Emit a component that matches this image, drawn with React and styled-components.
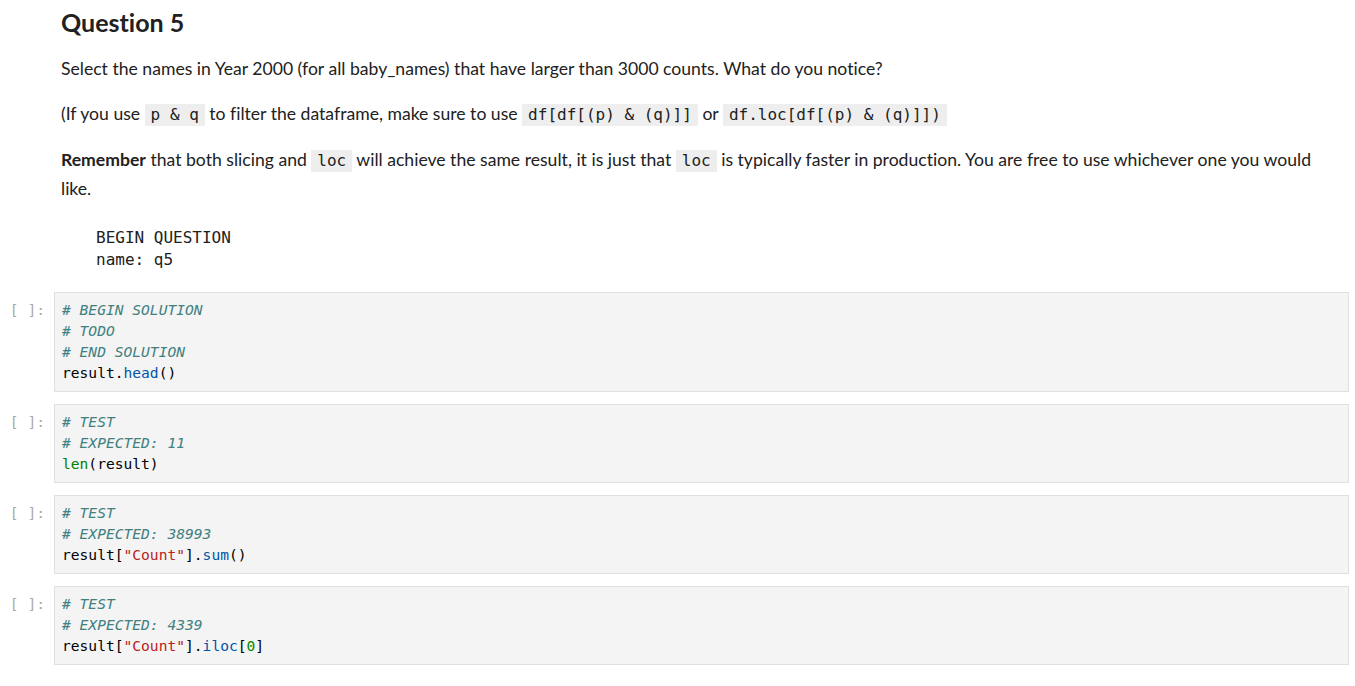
import React from 'react'
import styled, { createGlobalStyle } from 'styled-components'

const GlobalStyle = createGlobalStyle`
  html, body {
    margin: 0;
    padding: 0;
    background: #ffffff;
  }
  body {
    font-family: Lato, "Noto Sans", sans-serif;
    font-variant-ligatures: none;
    color: #212121;
  }
`

const mono = `"DejaVu Sans Mono", "Liberation Mono", monospace`

const Notebook = styled.div`
  display: flex;
  flex-direction: column;
  padding: 7px 6px 20px 0;
`

const Cell = styled.div`
  display: flex;
  align-items: flex-start;
  margin-bottom: ${(p) => (p.$gap === undefined ? 12 : p.$gap)}px;
`

const Prompt = styled.div`
  flex: 0 0 54px;
  box-sizing: border-box;
  padding: 7px 9px 0 0;
  text-align: right;
  font-family: ${mono};
  font-size: 14.6px;
  line-height: 21px;
  color: #aaaaaa;
  white-space: pre;
`

const Markdown = styled.div`
  flex: 1;
  min-width: 0;
  padding: 0 6px 0 7px;
`

const Heading = styled.h2`
  margin: 0 0 17px;
  font-size: 25px;
  line-height: 31px;
  font-weight: 700;
  color: #212121;
`

const Para = styled.p`
  margin: 0 0 17px;
  font-size: 17.6px;
  line-height: 28px;
`

const Code = styled.code`
  font-family: ${mono};
  font-size: 16px;
  background: #eeeeee;
  padding: 1px 6px 2px;
  color: #212121;
`

const Pre = styled.pre`
  margin: 24px 0 21px 35px;
  font-family: ${mono};
  font-size: 16px;
  line-height: 22px;
  color: #212121;
`

const Editor = styled.div`
  flex: 1;
  min-width: 0;
  background: #f4f4f4;
  border: 1px solid #e0e0e0;
  padding: 6px 7px 8px;
  font-family: ${mono};
  font-size: 14.6px;
  line-height: 21px;
  color: #000000;
  white-space: pre;
`

const Line = styled.div`
  min-height: 21px;
`

const tokColors = {
  comment: '#408080',
  prop: '#0055aa',
  builtin: '#008000',
  str: '#ba2121',
  num: '#008800',
}

const Tok = styled.span`
  color: ${(p) => tokColors[p.$k] || '#000'};
  font-style: ${(p) => (p.$k === 'comment' ? 'italic' : 'normal')};
`

const CodeCell = ({ lines, gap }) => (
  <Cell $gap={gap}>
    <Prompt>[ ]:</Prompt>
    <Editor>
      {lines.map((l, i) => (
        <Line key={i}>{l}</Line>
      ))}
    </Editor>
  </Cell>
)

const App = () => (
  <>
    <GlobalStyle />
    <Notebook>
      <Cell $gap={0}>
        <Prompt />
        <Markdown>
          <Heading>Question 5</Heading>
          <Para>
            Select the names in Year 2000 (for all baby_names) that have larger than 3000 counts. What do you notice?
          </Para>
          <Para>
            (If you use <Code>p &amp; q</Code> to filter the dataframe, make sure to use{' '}
            <Code>df[df[(p) &amp; (q)]]</Code> or <Code>df.loc[df[(p) &amp; (q)]])</Code>
          </Para>
          <Para>
            <b>Remember</b> that both slicing and <Code>loc</Code> will achieve the same result, it is just that{' '}
            <Code>loc</Code> is typically faster in production. You are free to use whichever one you would like.
          </Para>
          <Pre>{'BEGIN QUESTION\nname: q5'}</Pre>
        </Markdown>
      </Cell>

      <CodeCell
        lines={[
          <Tok $k="comment"># BEGIN SOLUTION</Tok>,
          <Tok $k="comment"># TODO</Tok>,
          <Tok $k="comment"># END SOLUTION</Tok>,
          <>result.<Tok $k="prop">head</Tok>()</>,
        ]}
      />
      <CodeCell
        lines={[
          <Tok $k="comment"># TEST</Tok>,
          <Tok $k="comment"># EXPECTED: 11</Tok>,
          <><Tok $k="builtin">len</Tok>(result)</>,
        ]}
      />
      <CodeCell
        lines={[
          <Tok $k="comment"># TEST</Tok>,
          <Tok $k="comment"># EXPECTED: 38993</Tok>,
          <>result[<Tok $k="str">"Count"</Tok>].<Tok $k="prop">sum</Tok>()</>,
        ]}
      />
      <CodeCell
        lines={[
          <Tok $k="comment"># TEST</Tok>,
          <Tok $k="comment"># EXPECTED: 4339</Tok>,
          <>result[<Tok $k="str">"Count"</Tok>].<Tok $k="prop">iloc</Tok>[<Tok $k="num">0</Tok>]</>,
        ]}
      />
    </Notebook>
  </>
)

export default App
